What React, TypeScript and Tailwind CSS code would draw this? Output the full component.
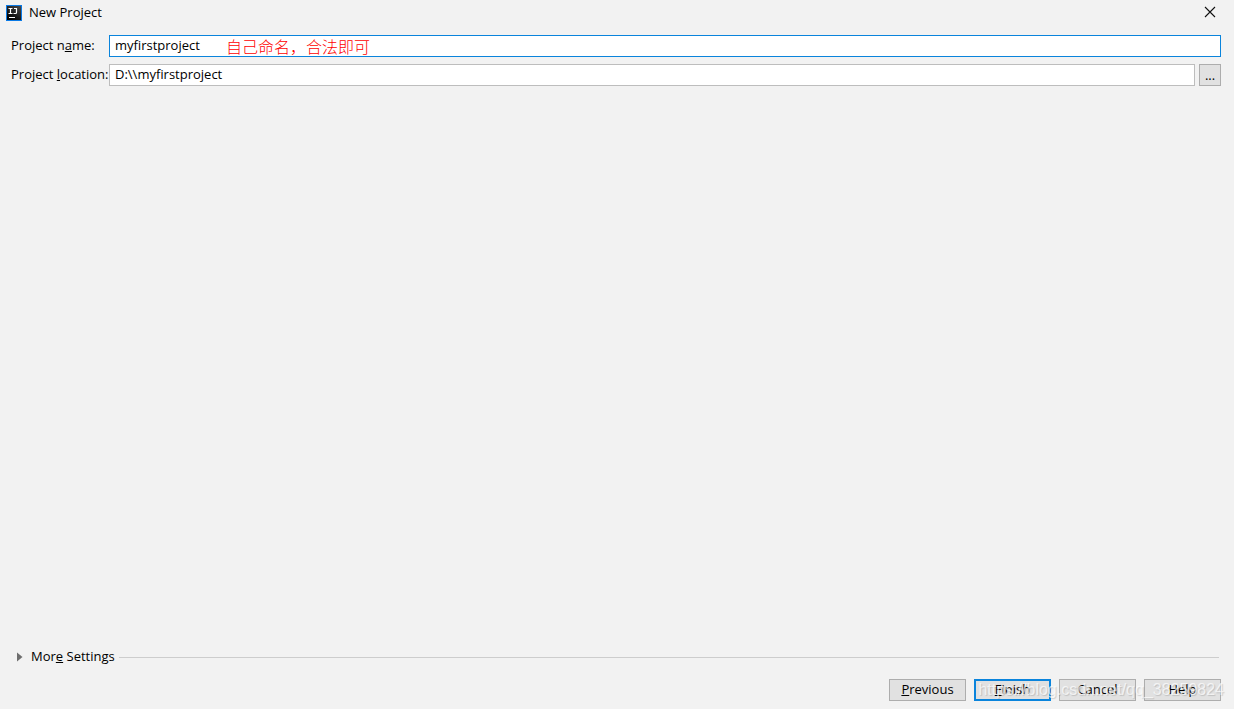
import { useState } from "react"

const field =
  "h-[22px] min-w-0 flex-1 bg-white px-[5px] pb-0.5 text-[13px] leading-4 text-black outline-none"

const dialogButton =
  "flex h-[22px] w-[77px] items-center justify-center bg-[#e1e1e1] pb-0.5 text-[13px] leading-4"

function IdeaLogo() {
  return (
    <svg width="16" height="16" viewBox="0 0 16 16" aria-hidden="true">
      <defs>
        <linearGradient id="logo-fill" x1="1" y1="0" x2="0.3" y2="1">
          <stop offset="0" stopColor="#4a4a4a" />
          <stop offset="1" stopColor="#000" />
        </linearGradient>
      </defs>
      <rect width="16" height="16" fill="#0a7ae6" />
      <rect x="1" y="1" width="14" height="14" fill="url(#logo-fill)" />
      <path
        d="M2.5 3.5h4M4.5 3.5v5M2.5 8.5h4M8 3.5h3M10.5 3v4.5q0 1-1 1H7.5"
        fill="none"
        stroke="#fff"
        strokeWidth="1.2"
      />
      <path d="M3 12.5h6" stroke="#fff" />
    </svg>
  )
}

export default function App() {
  const [name, setName] = useState("myfirstproject")
  const [location, setLocation] = useState("D:\\\\myfirstproject")

  return (
    <div className="relative flex min-h-screen flex-col bg-[#f2f2f2] font-['Open_Sans','Noto_Sans_CJK_SC',sans-serif] text-[13px] leading-5 text-black">
      <header className="flex h-[26px] items-center pl-1.5 pr-[18px]">
        <IdeaLogo />
        <h1 className="ml-[7px] flex-1 pb-0.5">New Project</h1>
        <button type="button" aria-label="Close" className="pb-0.5">
          <svg width="12" height="12" viewBox="0 0 12 12" fill="none" stroke="#111" strokeWidth="1.1">
            <path d="M1 1l10 10M11 1L1 11" />
          </svg>
        </button>
      </header>

      <main className="flex flex-1 flex-col pt-[9px]">
        <div className="flex flex-col gap-[7px] pl-[11px] pr-[13px]">
          <div className="relative flex items-center">
            <label htmlFor="project-name" className="w-[98px] pb-0.5 whitespace-nowrap">
              Project n<u>a</u>me:
            </label>
            <input
              id="project-name"
              className={`${field} border border-[#0a84dc]`}
              value={name}
              onChange={(e) => setName(e.target.value)}
            />
            <span className="pointer-events-none absolute left-[215px] font-['Noto_Sans_CJK_SC',sans-serif] text-base leading-5 font-light text-[#ff0000]">
              自己命名，合法即可
            </span>
          </div>
          <div className="flex items-center">
            <label htmlFor="project-location" className="w-[98px] pb-0.5 whitespace-nowrap">
              Project <u>l</u>ocation:
            </label>
            <input
              id="project-location"
              className={`${field} border border-[#bdbdbd]`}
              value={location}
              onChange={(e) => setLocation(e.target.value)}
            />
            <button
              type="button"
              aria-label="Browse"
              className="ml-1 flex h-[22px] w-[22px] items-center justify-center border border-[#adadad] bg-[#e1e1e1]"
            >
              ...
            </button>
          </div>
        </div>

        <button type="button" className="mt-auto flex items-center pl-[17px] pr-[15px] text-left">
          <svg width="6" height="10" viewBox="0 0 6 10" fill="#6e6e6e" aria-hidden="true">
            <path d="M0 0.5L5.5 5L0 9.5Z" />
          </svg>
          <span className="ml-2 pb-0.5">
            Mor<u>e</u> Settings
          </span>
          <span className="ml-1 h-px flex-1 bg-[#cdcdcd]" />
        </button>
      </main>

      <footer className="flex justify-end gap-2 pt-[11px] pr-[13px] pb-2">
        <button type="button" className={`${dialogButton} border border-[#adadad]`}>
          <span><u>P</u>revious</span>
        </button>
        <button type="button" className={`${dialogButton} border-2 border-[#0a84dc]`}>
          <span><u>F</u>inish</span>
        </button>
        <button type="button" className={`${dialogButton} border border-[#adadad]`}>
          Cancel
        </button>
        <button type="button" className={`${dialogButton} border border-[#adadad]`}>
          Help
        </button>
      </footer>

      <span className="pointer-events-none absolute right-[10px] bottom-[9px] font-['Liberation_Sans',sans-serif] text-base leading-5 text-white/70 [text-shadow:1px_1px_1px_rgba(0,0,0,0.15)]">
        https://blog.csdn.net/qq_38259824
      </span>
    </div>
  )
}
